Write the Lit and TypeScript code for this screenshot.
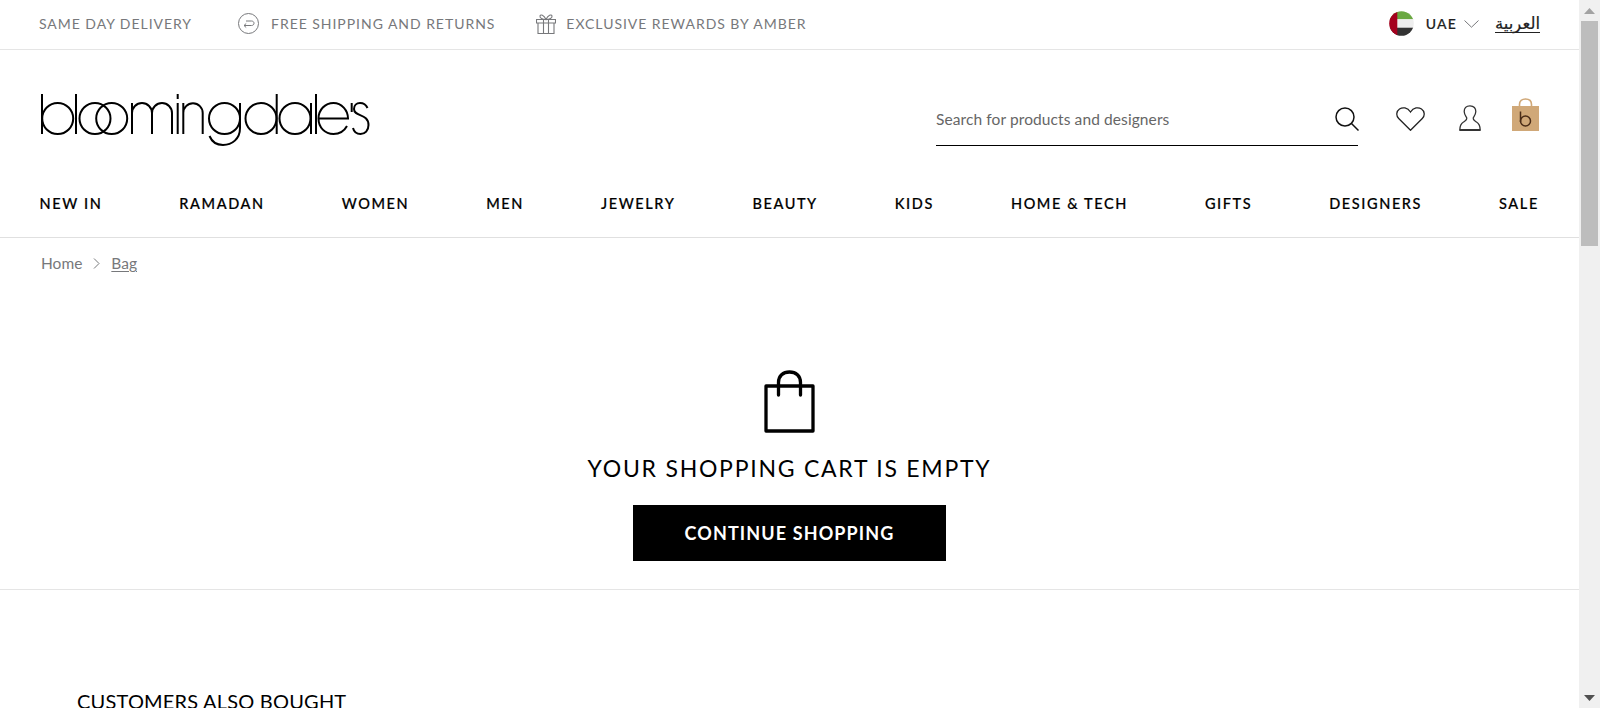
import { LitElement, html, css, svg } from 'lit';
import { customElement } from 'lit/decorators.js';

const NAV = ['NEW IN', 'RAMADAN', 'WOMEN', 'MEN', 'JEWELRY', 'BEAUTY', 'KIDS', 'HOME & TECH', 'GIFTS', 'DESIGNERS', 'SALE'];

// stroke drawn wordmark, viewBox starts at page coords (40, 90)
const logo = svg`
  <g fill="none" stroke="#000" stroke-width="2">
    <path d="M2 5V45" />
    <circle cx="17.7" cy="29.5" r="15.5" />
    <path d="M36 5V45" />
    <circle cx="55" cy="29.5" r="15.5" />
    <circle cx="71.7" cy="29.5" r="15.5" />
    <path d="M92 45V14M92 24a10 10 0 0 1 20 0V45M112 24a10 10 0 0 1 20 0V45" />
    <path d="M137.7 5V10M137.7 14V45" />
    <path d="M143.3 45V14M143.3 24a9.7 9.7 0 0 1 19.4 0V45" />
    <circle cx="184.5" cy="29.5" r="15.5" />
    <path d="M200 14V39C200 50 192 56 183 56C177 56 172 53 169.500 47" />
    <circle cx="221" cy="29.500" r="15.500" />
    <path d="M236.700 5V45" />
    <circle cx="255" cy="29.500" r="15.500" />
    <path d="M271 14V45" />
    <path d="M276 5V45" />
    <path d="M279 29.500H308C308 21 301.500 14 293.500 14C285 14 278.500 21 278.500 29.500C278.500 38.500 285 45 293.500 45C299.500 45 304.500 41.500 307 37" />
    <path d="M311.700 14V23" />
    <path d="M327.500 19C326 15.500 323 14 320 14C316.500 14 314 16.500 314 20C314 28 328.500 24 328.500 36C328.500 41.500 325 45 320.500 45C317 45 314 43 313 39" />
  </g>
`;

@customElement('app-root')
export class AppRoot extends LitElement {
  static styles = css`
    :host {
      display: flex;
      height: 708px;
      overflow: hidden;
      background: #fff;
      font-family: Lato, 'Liberation Sans', sans-serif;
      color: #000;
    }
    svg {
      display: block;
      flex: none;
    }
    .page {
      flex: 1;
      min-width: 0;
    }
    .topbar {
      height: 47px;
      border-bottom: 1px solid #e5e5e5;
      padding: 0 39px 2px 39px;
      display: flex;
      align-items: center;
      font-size: 14px;
      letter-spacing: 0.96px;
      color: #77787b;
    }
    .promo {
      display: flex;
      align-items: center;
      gap: 12px;
      margin-right: 41px;
    }
    .promo.first {
      margin-right: 46px;
    }
    .promo.gift {
      gap: 10px;
    }
    .locale {
      margin-left: auto;
      display: flex;
      align-items: center;
      color: #222;
    }
    .country {
      font-weight: 500;
      -webkit-text-stroke: 0.2px #222;
      letter-spacing: 1.12px;
      margin: 0 7px 0 12px;
    }
    .arabic {
      margin-left: 16px;
      color: #222;
      letter-spacing: 0;
      font-size: 16.5px;
      line-height: 17px;
      font-family: 'DejaVu Sans', sans-serif;
      -webkit-text-stroke: 0.2px #222;
      border-bottom: 1px solid #222;
    }
    .masthead {
      height: 135px;
      padding: 0 40px;
      display: flex;
      align-items: flex-start;
      justify-content: space-between;
    }
    .logo {
      margin-top: 39px;
    }
    .tools {
      display: flex;
      align-items: flex-start;
      margin-top: 47px;
    }
    .search {
      width: 422px;
      height: 48px;
      border-bottom: 1px solid #000;
      display: flex;
      align-items: center;
      justify-content: space-between;
      font-size: 15.5px;
      letter-spacing: 0.1px;
      color: #666;
    }
    .search span {
      margin-bottom: 4px;
    }
    .search svg {
      margin: 0 -1px 4px 0;
    }
    .heart {
      margin: 10px 0 0 38px;
    }
    .person {
      margin: 8px 0 0 34px;
    }
    .bag {
      margin: 1px 0 0 31px;
    }
    .nav {
      height: 53px;
      padding: 0 40px 16px 39.5px;
      border-bottom: 1px solid #e0e0e0;
      display: flex;
      justify-content: space-between;
      align-items: center;
      font-size: 14.5px;
      font-weight: 500;
      -webkit-text-stroke: 0.2px #000;
      letter-spacing: 1.6px;
      box-sizing: border-box;
    }
    .crumbs {
      padding: 0 41px;
      height: 50px;
      display: flex;
      align-items: center;
      gap: 11px;
      font-size: 15.5px;
      color: #77787b;
    }
    .crumbs u {
      text-underline-offset: 2px;
    }
    .empty {
      height: 302px;
      box-sizing: border-box;
      border-bottom: 1px solid #e5e5e5;
      display: flex;
      flex-direction: column;
      align-items: center;
      padding-top: 82px;
    }
    .empty h2 {
      margin: 21px 0 0;
      font-size: 23px;
      line-height: 28px;
      font-weight: 400;
      letter-spacing: 1.75px;
      color: #000;
    }
    .continue {
      margin-top: 23px;
      width: 313px;
      height: 56px;
      background: #000;
      color: #fff;
      display: flex;
      align-items: center;
      justify-content: center;
      font-size: 18px;
      font-weight: 700;
      letter-spacing: 1.12px;
    }
    .also {
      margin: 99px 0 0 77px;
      font-size: 20px;
      line-height: 24px;
      font-weight: 400;
      letter-spacing: 0.2px;
    }
    .scrollbar {
      width: 21px;
      flex: none;
      background: #f0f0f0;
      display: flex;
      flex-direction: column;
      align-items: center;
    }
    .arrow {
      height: 21px;
      flex: none;
      display: flex;
      align-items: center;
      justify-content: center;
    }
    .thumb {
      width: 17px;
      height: 225px;
      background: #bdbdbd;
    }
    .spacer {
      flex: 1;
    }
  `;

  render() {
    return html`
      <div class="page">
        <div class="topbar">
          <div class="promo first">SAME DAY DELIVERY</div>
          <div class="promo">
            <svg width="21" height="21" viewBox="0 0 21 21" fill="none" stroke="#77787b" stroke-width="1">
              <circle cx="10.500" cy="10.500" r="10" />
              <path d="M6 12.500H13.500C15 12.500 16 11.500 16 10.200C16 9 15 8 13.500 8H8M6 12.500L8.200 10.500M6 12.500L8.200 14.500" />
            </svg>
            FREE SHIPPING AND RETURNS
          </div>
          <div class="promo gift">
            <svg width="20" height="20" viewBox="0 0 20 20" fill="none" stroke="#77787b" stroke-width="1.100">
              <path d="M.5 5.500H19.500V9H.5ZM2 9V19.500H18V9M7.500 5.500V19.500M12.500 5.500V19.500" />
              <path d="M10 5.500C8 1 4.500 0 4 2C3.500 4 6.500 5.500 10 5.500C13.500 5.500 16.500 4 16 2C15.500 0 12 1 10 5.500Z" />
            </svg>
            EXCLUSIVE REWARDS BY AMBER
          </div>
          <div class="locale">
            <svg width="25" height="25" viewBox="0 0 25 25">
              <defs>
                <clipPath id="flag"><circle cx="12.500" cy="12.500" r="12.300" /></clipPath>
              </defs>
              <g clip-path="url(#flag)">
                <rect width="25" height="8.300" fill="#6aa842" />
                <rect y="8.300" width="25" height="8.400" fill="#eeeeee" />
                <rect y="16.700" width="25" height="8.300" fill="#333333" />
                <rect width="8.300" height="25" fill="#a5001e" />
              </g>
            </svg>
            <span class="country">UAE</span>
            <svg width="15" height="8" viewBox="0 0 15 8" fill="none" stroke="#77787b" stroke-width="1">
              <path d="M.5 .5L7.500 7.200L14.500 .5" />
            </svg>
            <span class="arabic" dir="rtl">العربية</span>
          </div>
        </div>

        <div class="masthead">
          <svg class="logo" width="332" height="58" viewBox="0 0 332 58">${logo}</svg>
          <div class="tools">
            <div class="search">
              <span>Search for products and designers</span>
              <svg width="24" height="24" viewBox="0 0 24 24" fill="none" stroke="#111" stroke-width="1.500">
                <circle cx="10" cy="10" r="9" />
                <path d="M16.500 16.500L23.500 23.500" />
              </svg>
            </div>
            <svg class="heart" width="29" height="24" viewBox="0 0 29 24" fill="none" stroke="#222" stroke-width="1.300">
              <path d="M14.500 23.300L2.700 11.500C-.3 8.500 .5 4 3.500 2C6.500 0 11.500 .3 14.500 5C17.500 .3 22.500 0 25.500 2C28.500 4 29.300 8.500 26.300 11.500Z" />
            </svg>
            <svg class="person" width="22" height="26" viewBox="0 0 22 26" fill="none" stroke="#333" stroke-width="1.300">
              <path d="M11 .8C7 .8 5.200 3.500 5.200 6.500C5.200 9.500 7 11.500 7.800 13C8.100 15 6.500 15.500 4.500 17C2 18.500 .8 20.500 .8 25H21.200C21.200 20.500 20 18.500 17.500 17C15.500 15.500 13.900 15 14.200 13C15 11.500 16.800 9.500 16.800 6.500C16.800 3.500 15 .8 11 .8Z" />
              <path d="M.8 25H21.200" stroke-width="2" />
            </svg>
            <svg class="bag" width="27" height="33" viewBox="0 0 27 33">
              <rect y="8" width="27" height="25" fill="#d0a878" />
              <path d="M7.500 8.500V6.500C7.500 3 10 1 13.500 1C17 1 19.500 3 19.500 6.500V8.500" fill="none" stroke="#d0a878" stroke-width="1.600" />
              <path d="M8.500 13.500V24" stroke="#4a2c17" stroke-width="1.500" fill="none" />
              <circle cx="13.500" cy="23" r="5" stroke="#4a2c17" stroke-width="1.500" fill="none" />
            </svg>
          </div>
        </div>

        <div class="nav">${NAV.map((n) => html`<span>${n}</span>`)}</div>

        <div class="crumbs">
          <span>Home</span>
          <svg width="7" height="11" viewBox="0 0 7 11" fill="none" stroke="#77787b" stroke-width="1">
            <path d="M1 .5L6 5.500L1 10.500" />
          </svg>
          <u>Bag</u>
        </div>

        <div class="empty">
          <svg width="51" height="63" viewBox="0 0 51 63" fill="none" stroke="#000" stroke-width="3.300" stroke-linejoin="round" stroke-linecap="round">
            <rect x="2" y="16" width="47" height="45" />
            <path d="M14.500 25V12.500C14.500 6 19 2 25.500 2C32 2 36.500 6 36.500 12.500V25" />
          </svg>
          <h2>YOUR SHOPPING CART IS EMPTY</h2>
          <div class="continue">CONTINUE SHOPPING</div>
        </div>

        <div class="also">CUSTOMERS ALSO BOUGHT</div>
      </div>

      <div class="scrollbar">
        <div class="arrow">
          <svg width="11" height="6" viewBox="0 0 11 6"><path d="M5.500 0L11 6H0Z" fill="#a3a3a3" /></svg>
        </div>
        <div class="thumb"></div>
        <div class="spacer"></div>
        <div class="arrow">
          <svg width="11" height="6" viewBox="0 0 11 6"><path d="M0 0H11L5.500 6Z" fill="#505050" /></svg>
        </div>
      </div>
    `;
  }
}
